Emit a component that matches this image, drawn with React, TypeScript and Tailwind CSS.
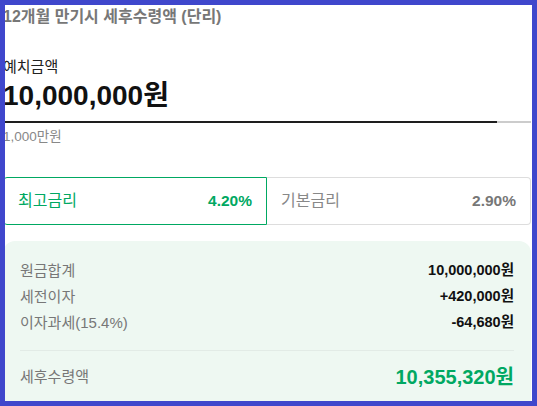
const font = { fontFamily: '"Liberation Sans", "Noto Sans CJK KR", sans-serif' };

const rows = [
  { label: '원금합계', value: '10,000,000원' },
  { label: '세전이자', value: '+420,000원' },
  { label: '이자과세(15.4%)', value: '-64,680원' },
];

export default function App() {
  return (
    <div
      className="w-[537px] h-[406px] border-[5px] border-[#3f47cc] bg-white overflow-hidden"
      style={font}
    >
      <div className="-ml-[2px] w-[528px]">
        <h2 className="text-[16px] leading-[24px] font-bold text-[#777]">12개월 만기시 세후수령액 (단리)</h2>

        <div className="mt-[28px] text-[15px] leading-[20px] text-[#222]">예치금액</div>
        <div className="mt-[2px] text-[28px] leading-[34px] font-bold text-[#111]">10,000,000원</div>

        <div className="mt-[8px] h-[2px] w-full bg-[#cccccc] flex">
          <div className="h-full w-[494px] bg-[#1e1e1e]" />
        </div>
        <div className="mt-[5px] text-[13.5px] leading-[18px] text-[#888]">1,000만원</div>

        <div className="mt-[31px] grid grid-cols-2 h-[48px]">
          <div className="flex items-center justify-between px-[14px] border border-[#00a862] rounded-l-[4px]">
            <span className="text-[16px] text-[#00a862]">최고금리</span>
            <span className="text-[15.5px] font-bold text-[#00a862]">4.20%</span>
          </div>
          <div className="flex items-center justify-between px-[14px] border border-l-0 border-[#dddddd] rounded-r-[4px]">
            <span className="text-[16px] text-[#888]">기본금리</span>
            <span className="text-[15.5px] font-bold text-[#777]">2.90%</span>
          </div>
        </div>

        <div className="mt-[16px] rounded-[12px] bg-[#eef8f2] px-[17px] pt-[17px] pb-[20px]">
          {rows.map((r) => (
            <div key={r.label} className="flex items-center justify-between h-[26px]">
              <span className="text-[15px] text-[#777]">{r.label}</span>
              <span className="text-[14.5px] font-bold text-[#111]">{r.value}</span>
            </div>
          ))}
          <div className="mt-[14px] h-px bg-[#e2ebe6]" />
          <div className="mt-[12px] flex items-center justify-between h-[28px]">
            <span className="text-[15px] text-[#777]">세후수령액</span>
            <span className="text-[20px] font-bold text-[#00a862]">10,355,320원</span>
          </div>
        </div>
      </div>
    </div>
  );
}
